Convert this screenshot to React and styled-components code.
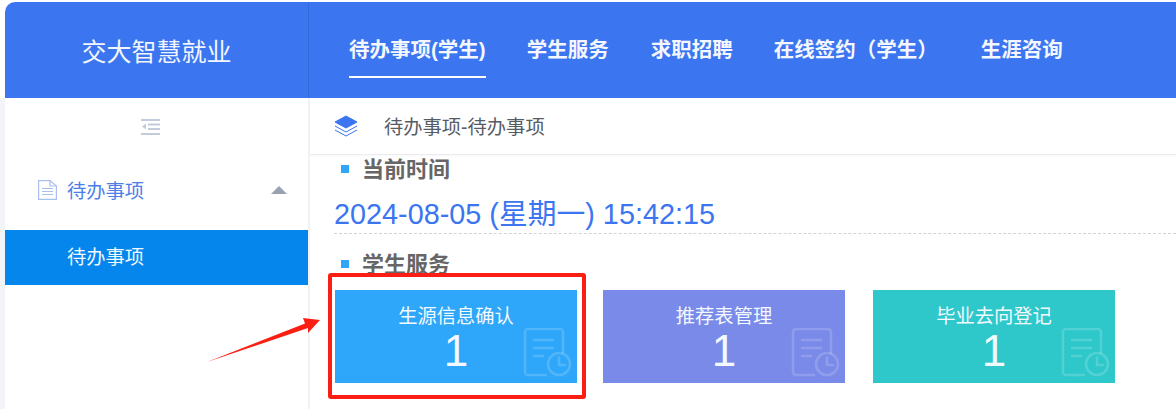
import React from "react"
import styled, { createGlobalStyle } from 'styled-components'

const GlobalStyle = createGlobalStyle`
  html, body {
    margin: 0;
    padding: 0;
    height: 100%;
    overflow: hidden;
    background: #f3f4f7;
    font-family: "Liberation Sans", "Noto Sans CJK SC", sans-serif;
  }
`

const Page = styled.div`
  position: relative;
  width: 1176px;
  height: 409px;
  overflow: hidden;
  background: #fff;
  display: flex;
  flex-direction: column;
`

const Header = styled.header`
  display: flex;
  height: 96px;
  margin: 2px 0 0 5px;
  background: #3b75f0;
  border-top-left-radius: 10px;
`

const Logo = styled.div`
  width: 303px;
  flex: none;
  display: flex;
  align-items: center;
  justify-content: center;
  font-size: 25px;
  color: #f2f6ff;
  border-right: 1px solid #3669da;
`

const Nav = styled.nav`
  display: flex;
  padding-left: 40px;
`

const NavItem = styled.a`
  display: block;
  height: 74px;
  line-height: 96px;
  margin-right: ${p => p.$gap}px;
  font-size: 20.5px;
  font-weight: 700;
  white-space: pre;
  color: #f4f7ff;
  border-bottom: ${p => (p.$active ? '2px solid #fff' : '2px solid transparent')};
`

const Body = styled.div`
  flex: 1;
  display: flex;
  min-height: 0;
  padding-left: 5px;
  background: linear-gradient(90deg, #f3f4f7 5px, transparent 5px);
`

const Sidebar = styled.aside`
  width: 303px;
  flex: none;
  background: #fff;
  border-right: 2px solid #f1f2f5;
`

const Collapse = styled.div`
  height: 58px;
  display: flex;
  align-items: center;
  justify-content: center;
  padding-right: 12px;
  box-sizing: border-box;
`

const MenuGroup = styled.div`
  height: 74px;
  display: flex;
  align-items: center;
  padding: 0 21px 6px 33px;
  box-sizing: border-box;
  font-size: 19.3px;
  color: #4d7ee8;
  gap: 10px;
`

const Caret = styled.span`
  margin-left: auto;
  width: 0;
  height: 0;
  border-left: 8px solid transparent;
  border-right: 8px solid transparent;
  border-bottom: 8px solid #98a2b3;
`

const MenuItem = styled.div`
  height: 55px;
  line-height: 55px;
  padding-left: 62px;
  font-size: 19.3px;
  color: #f2f8ff;
  background: #0486ec;
`

const Main = styled.main`
  flex: 1;
  min-width: 0;
`

const Crumb = styled.div`
  height: 56px;
  display: flex;
  align-items: center;
  padding-left: 24px;
  gap: 26px;
  font-size: 19.3px;
  color: #555c66;
  border-bottom: 1px solid #ececee;
  box-shadow: 0 1px 2px rgba(0, 0, 0, 0.03);
`

const Section = styled.section`
  padding-left: 25px;
  margin-top: -2px;
`

const SectionTitle = styled.h2`
  display: flex;
  align-items: center;
  margin: ${p => p.$top || 0}px 0 0;
  height: 28px;
  font-size: 22px;
  font-weight: 700;
  color: #666;

  &::before {
    content: "";
    width: 8px;
    height: 8px;
    margin: 3px 13px 0 6px;
    background: #2ea6f9;
  }
`

const Clock = styled.div`
  height: 48px;
  line-height: 57px;
  font-size: 28.8px;
  color: #3b75f0;
  border-bottom: 1px dashed #d3d3d3;
  box-sizing: border-box;
  margin: 5px 0 0 -1px;
  white-space: nowrap;
`

const Cards = styled.div`
  display: flex;
  margin-top: 14px;
`

const Card = styled.div`
  position: relative;
  width: 242px;
  height: 93px;
  flex: none;
  margin-right: ${p => p.$gap}px;
  background: ${p => p.$color};
  color: #f2f9ff;
  text-align: center;
  overflow: hidden;
`

const CardTitle = styled.div`
  font-size: 19.3px;
  line-height: 24px;
  margin-top: 15px;
`

const CardCount = styled.div`
  font-size: 44px;
  line-height: 46px;
  margin-top: -1px;
`

const CardMark = styled.svg`
  position: absolute;
  right: 4px;
  bottom: 5px;
  width: 50px;
  height: 50px;
  fill: none;
  stroke: rgba(255, 255, 255, 0.17);
  stroke-width: 2.6;
  stroke-linecap: round;
  stroke-linejoin: round;
`

const Highlight = styled.div`
  position: absolute;
  left: 328px;
  top: 273px;
  width: 250px;
  height: 118px;
  border: 4px solid #fa1e14;
  border-radius: 3px;
  pointer-events: none;
`

const Arrow = styled.svg`
  position: absolute;
  left: 200px;
  top: 310px;
  width: 130px;
  height: 60px;
  pointer-events: none;
`

const CardIcon = () => (
  <CardMark viewBox="0 0 50 50">
    <path d="M23 47H5a3 3 0 0 1-3-3V4a3 3 0 0 1 3-3h32a3 3 0 0 1 3 3v21" />
    <path d="M11 12h19M11 20h19M11 28h9" />
    <circle cx="36" cy="36" r="11" />
    <path d="M36 29.5V37H42" />
  </CardMark>
)

const cards = [
  { title: '生源信息确认', color: '#2ea6f9', gap: 26 },
  { title: '推荐表管理', color: '#7a8ae8', gap: 28 },
  { title: '毕业去向登记', color: '#2ec8cb', gap: 0 },
]

const App = () => (
  <Page>
    <GlobalStyle />
    <Header>
      <Logo>交大智慧就业</Logo>
      <Nav>
        <NavItem $active $gap={41}>待办事项(学生)</NavItem>
        <NavItem $gap={42}>学生服务</NavItem>
        <NavItem $gap={41}>求职招聘</NavItem>
        <NavItem $gap={43}>在线签约（学生）</NavItem>
        <NavItem $gap={0}>生涯咨询</NavItem>
      </Nav>
    </Header>
    <Body>
      <Sidebar>
        <Collapse>
          <svg width="19" height="16" viewBox="0 0 19 16" fill="#c3cbdc">
            <rect x="0" y="0" width="19" height="2" />
            <rect x="7" y="4.5" width="12" height="2" />
            <rect x="7" y="9" width="12" height="2" />
            <rect x="0" y="14" width="19" height="2" />
            <path d="M5 4.5v6L1 7.5z" />
          </svg>
        </Collapse>
        <MenuGroup>
          <svg width="19" height="20" viewBox="0 0 19 20" fill="none" stroke="#a9bff2" strokeWidth="1.2">
            <path d="M.6.6H12L18.4 6V19.4H.6z" />
            <path d="M12 .6V6h6.4M4 8.5h11M4 11.5h11M4 14.5h11" />
          </svg>
          待办事项
          <Caret />
        </MenuGroup>
        <MenuItem>待办事项</MenuItem>
      </Sidebar>
      <Main>
        <Crumb>
          <svg width="24" height="22" viewBox="0 0 24 22" fill="none" stroke="#3b75f0" strokeWidth="1">
            <path d="M12 1 23 7l-11 6L1 7z" fill="#3b75f0" />
            <path d="M1 11l11 6 11-6M1 15l11 6 11-6" />
          </svg>
          待办事项-待办事项
        </Crumb>
        <Section>
          <SectionTitle>当前时间</SectionTitle>
          <Clock>2024-08-05 (星期一) 15:42:15</Clock>
          <SectionTitle $top={14}>学生服务</SectionTitle>
          <Cards>
            {cards.map(c => (
              <Card key={c.title} $color={c.color} $gap={c.gap}>
                <CardTitle>{c.title}</CardTitle>
                <CardCount>1</CardCount>
                <CardIcon />
              </Card>
            ))}
          </Cards>
        </Section>
      </Main>
    </Body>
    <Highlight />
    <Arrow viewBox="0 0 130 60">
      <path d="M7 52 L105 13.5 L103 8 L120 10 L108 23 L108 18 Z" fill="#fa1e14" />
    </Arrow>
  </Page>
)

export default App
